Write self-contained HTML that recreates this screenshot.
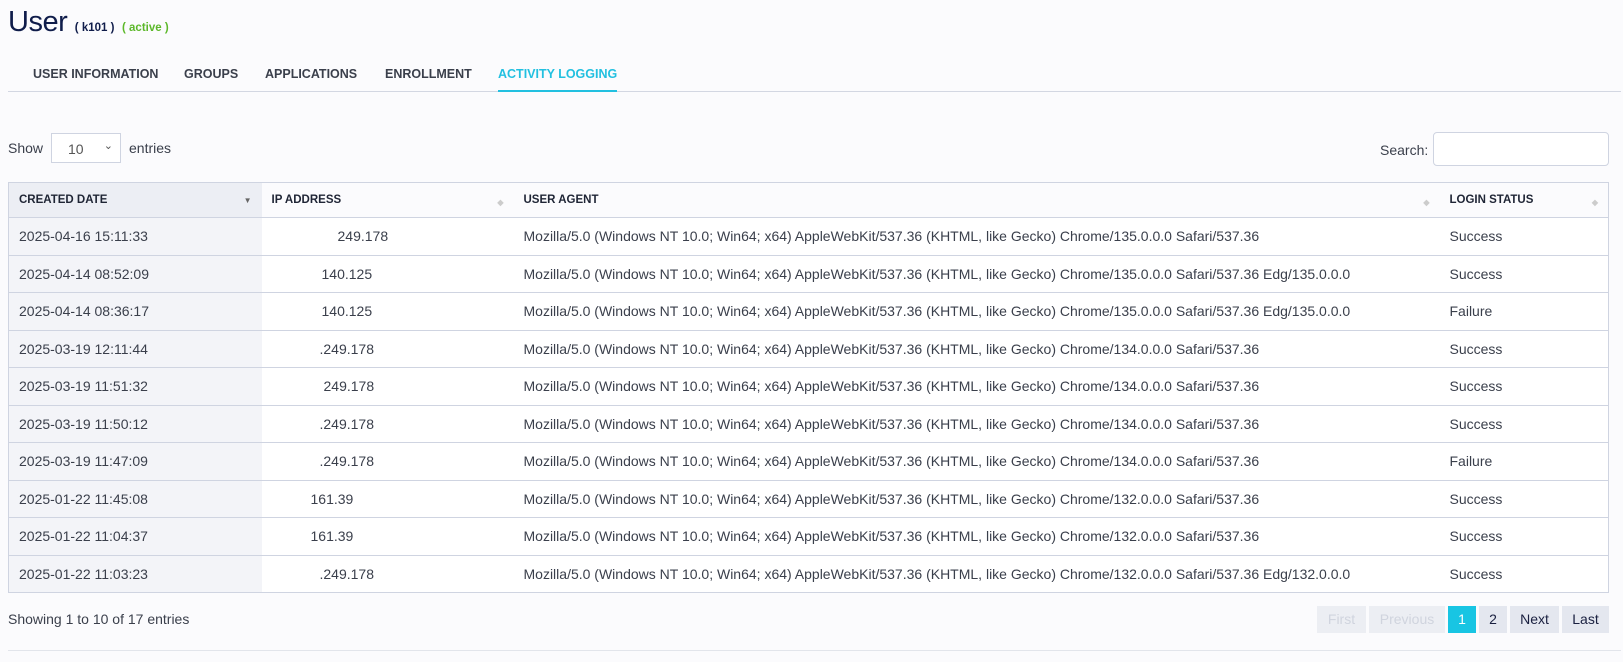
<!DOCTYPE html>
<html><head><meta charset="utf-8"><style>
*{box-sizing:border-box;margin:0;padding:0}
body{width:1623px;height:662px;background:#fbfbfd;font-family:"Liberation Sans",sans-serif;color:#3a3f4b;position:relative;overflow:hidden}
.abs{position:absolute}
h1{position:absolute;left:8px;top:6px;font-size:29px;font-weight:normal;color:#0f1c4a;letter-spacing:-0.5px}
h1 small{font-size:11.5px;font-weight:bold;letter-spacing:0}
.tabs{position:absolute;left:8px;top:67px;width:1613px;height:25px;border-bottom:1px solid #d3d7e2;font-size:12.5px;font-weight:bold;color:#3a3f4b}
.tabs span{position:absolute;top:0;height:25px}
table{position:absolute;left:8px;top:182px;width:1601px;border-collapse:collapse;font-size:14px;border:1px solid #cfd4e1}
th{height:35px;text-align:left;font-size:11.5px;font-weight:bold;color:#1f2535;padding-left:10px;position:relative;border-bottom:1px solid #cfd4e1}
td{height:37.5px;padding-left:10px;border-bottom:1px solid #cfd4e1;background:#fff;white-space:nowrap;letter-spacing:0}
td:first-child{background:#f3f4f8}
th:first-child{background:#eceef4}
.s{position:absolute;right:10px;top:15px;font-size:8px;color:#ccc}
.pg{position:absolute;top:606px;height:27px;font-size:14px;line-height:27px;text-align:center;background:#e4e7ef;color:#1a2040}
</style></head><body>
<h1>User <small>( k101 )</small> <small style="color:#5cb82a">( active )</small></h1>
<div class="tabs">
<span style="left:25px">USER INFORMATION</span><span style="left:176px">GROUPS</span><span style="left:257px">APPLICATIONS</span><span style="left:377px">ENROLLMENT</span><span style="left:490px;color:#22c0e0;border-bottom:2px solid #22c0e0">ACTIVITY LOGGING</span>
</div>
<div class="abs" style="left:8px;top:140px;font-size:14px">Show</div>
<div class="abs" style="left:51px;top:133px;width:70px;height:30px;border:1px solid #cfd4e1;background:#fff;font-size:14px;padding:7px 0 0 16px;color:#555">10<span style="position:absolute;right:7px;top:5px;font-size:11px;color:#555">&#8964;</span></div>
<div class="abs" style="left:129px;top:140px;font-size:14px">entries</div>
<div class="abs" style="left:1380px;top:142px;font-size:14px">Search:</div>
<div class="abs" style="left:1433px;top:132px;width:176px;height:34px;border:1px solid #cfd4e1;border-radius:4px;background:#fff"></div>
<table>
<colgroup><col style="width:253px"><col style="width:252px"><col style="width:926px"><col></colgroup>
<tr><th>CREATED DATE<span class="s" style="color:#666;top:13px">&#9660;</span></th><th>IP ADDRESS<span class="s">&#9670;</span></th><th>USER AGENT<span class="s">&#9670;</span></th><th>LOGIN STATUS<span class="s">&#9670;</span></th></tr>
<tr><td>2025-04-16 15:11:33</td><td style="padding-left:76px">249.178</td><td>Mozilla/5.0 (Windows NT 10.0; Win64; x64) AppleWebKit/537.36 (KHTML, like Gecko) Chrome/135.0.0.0 Safari/537.36</td><td>Success</td></tr>
<tr><td>2025-04-14 08:52:09</td><td style="padding-left:60px">140.125</td><td>Mozilla/5.0 (Windows NT 10.0; Win64; x64) AppleWebKit/537.36 (KHTML, like Gecko) Chrome/135.0.0.0 Safari/537.36 Edg/135.0.0.0</td><td>Success</td></tr>
<tr><td>2025-04-14 08:36:17</td><td style="padding-left:60px">140.125</td><td>Mozilla/5.0 (Windows NT 10.0; Win64; x64) AppleWebKit/537.36 (KHTML, like Gecko) Chrome/135.0.0.0 Safari/537.36 Edg/135.0.0.0</td><td>Failure</td></tr>
<tr><td>2025-03-19 12:11:44</td><td style="padding-left:58px">.249.178</td><td>Mozilla/5.0 (Windows NT 10.0; Win64; x64) AppleWebKit/537.36 (KHTML, like Gecko) Chrome/134.0.0.0 Safari/537.36</td><td>Success</td></tr>
<tr><td>2025-03-19 11:51:32</td><td style="padding-left:62px">249.178</td><td>Mozilla/5.0 (Windows NT 10.0; Win64; x64) AppleWebKit/537.36 (KHTML, like Gecko) Chrome/134.0.0.0 Safari/537.36</td><td>Success</td></tr>
<tr><td>2025-03-19 11:50:12</td><td style="padding-left:58px">.249.178</td><td>Mozilla/5.0 (Windows NT 10.0; Win64; x64) AppleWebKit/537.36 (KHTML, like Gecko) Chrome/134.0.0.0 Safari/537.36</td><td>Success</td></tr>
<tr><td>2025-03-19 11:47:09</td><td style="padding-left:58px">.249.178</td><td>Mozilla/5.0 (Windows NT 10.0; Win64; x64) AppleWebKit/537.36 (KHTML, like Gecko) Chrome/134.0.0.0 Safari/537.36</td><td>Failure</td></tr>
<tr><td>2025-01-22 11:45:08</td><td style="padding-left:49px">161.39</td><td>Mozilla/5.0 (Windows NT 10.0; Win64; x64) AppleWebKit/537.36 (KHTML, like Gecko) Chrome/132.0.0.0 Safari/537.36</td><td>Success</td></tr>
<tr><td>2025-01-22 11:04:37</td><td style="padding-left:49px">161.39</td><td>Mozilla/5.0 (Windows NT 10.0; Win64; x64) AppleWebKit/537.36 (KHTML, like Gecko) Chrome/132.0.0.0 Safari/537.36</td><td>Success</td></tr>
<tr><td>2025-01-22 11:03:23</td><td style="padding-left:58px">.249.178</td><td>Mozilla/5.0 (Windows NT 10.0; Win64; x64) AppleWebKit/537.36 (KHTML, like Gecko) Chrome/132.0.0.0 Safari/537.36 Edg/132.0.0.0</td><td>Success</td></tr>
</table>
<div class="abs" style="left:8px;top:611px;font-size:14px">Showing 1 to 10 of 17 entries</div>
<div class="pg" style="left:1317px;width:49px;background:#eceef3;color:#d0d4de">First</div>
<div class="pg" style="left:1369px;width:76px;background:#eceef3;color:#d0d4de">Previous</div>
<div class="pg" style="left:1448px;width:28px;background:#18c5e3;color:#fff">1</div>
<div class="pg" style="left:1479px;width:28px">2</div>
<div class="pg" style="left:1510px;width:49px">Next</div>
<div class="pg" style="left:1562px;width:47px">Last</div>
<div class="abs" style="left:8px;top:650px;width:1613px;border-top:1px solid #e2e5eb"></div>
</body></html>
